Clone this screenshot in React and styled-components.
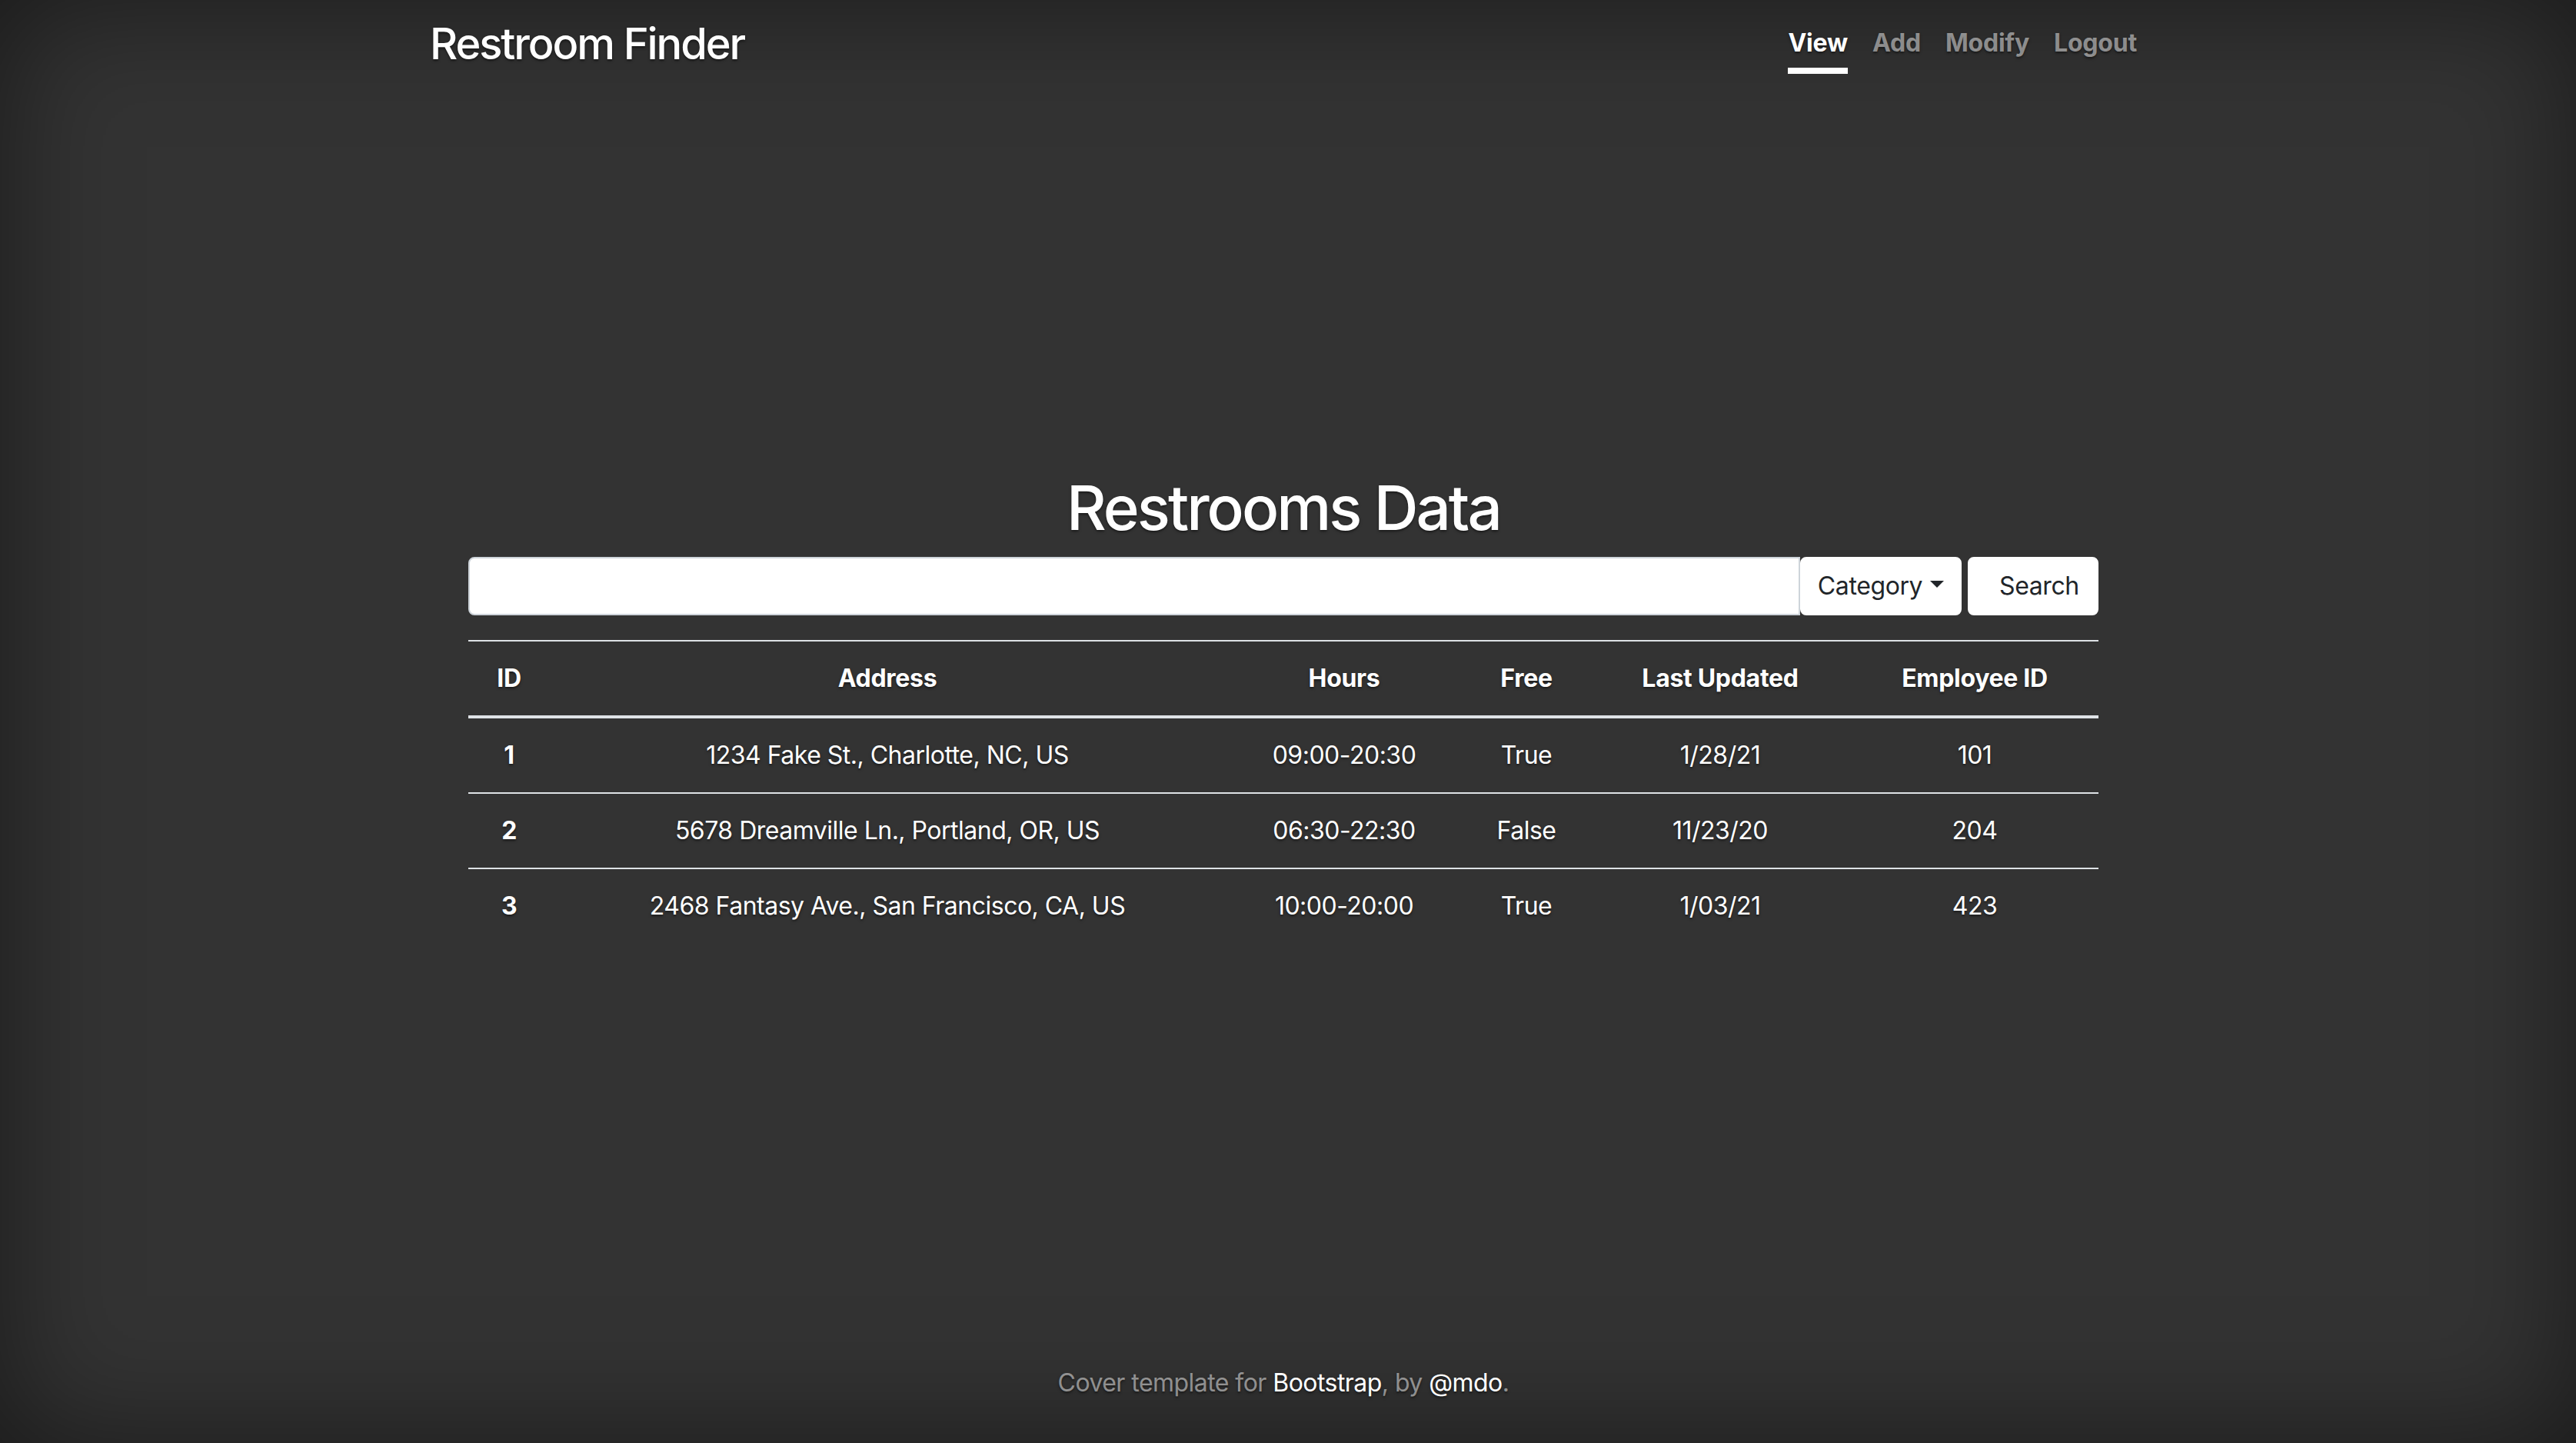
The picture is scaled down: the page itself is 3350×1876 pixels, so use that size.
import React from "react";
import styled, { createGlobalStyle } from "styled-components";

const GlobalStyle = createGlobalStyle`
  html, body {
    margin: 0;
    padding: 0;
    height: 100%;
  }
  body {
    background-color: #333;
    color: #fff;
    font-family: Inter, "Noto Sans", "Liberation Sans", sans-serif;
    font-size: 32px;
    line-height: 1.5;
    text-shadow: 0 1.6px 3.2px rgba(0, 0, 0, 0.5);
    box-shadow: inset 0 0 160px rgba(0, 0, 0, 0.5);
  }
  * { box-sizing: border-box; }
`;

const Page = styled.div`
  display: flex;
  min-height: 100vh;
  padding-right: 12px;
`;

const Cover = styled.div`
  display: flex;
  flex-direction: column;
  width: 2220px;
  min-height: 100vh;
  margin: 0 auto;
`;

const Masthead = styled.header`
  display: flex;
  justify-content: space-between;
  align-items: flex-start;
  padding-top: 24px;
`;

const Brand = styled.h3`
  margin: 0;
  font-size: 56px;
  font-weight: 500;
  line-height: 1.2;
  letter-spacing: -2.1px;
`;

const Nav = styled.nav`
  display: flex;
  gap: 32px;
`;

const NavLink = styled.a`
  display: block;
  padding: 8px 0;
  font-size: 32px;
  font-weight: 700;
  line-height: 48px;
  letter-spacing: -0.2px;
  text-decoration: none;
  color: ${(p) => (p.$active ? "#fff" : "rgba(255,255,255,0.5)")};
  border-bottom: 8px solid ${(p) => (p.$active ? "#fff" : "transparent")};
`;

const Main = styled.main`
  margin: auto 0;
  padding: 0 50px;
`;

const Heading = styled.h1`
  margin: 0 0 16px;
  font-size: 80px;
  font-weight: 500;
  line-height: 1.2;
  text-align: center;
  letter-spacing: -3px;
`;

const SearchRow = styled.div`
  display: flex;
  height: 76px;
`;

const SearchInput = styled.input`
  flex: 1;
  min-width: 0;
  height: 76px;
  border: 2px solid #ced4da;
  border-radius: 8px 0 0 8px;
  background: #fff;
  padding: 12px 24px;
  font-family: inherit;
  font-size: 32px;
  color: #495057;
  outline: none;
`;

const Button = styled.button`
  display: flex;
  align-items: center;
  justify-content: center;
  height: 76px;
  width: ${(p) => p.$w}px;
  margin-left: ${(p) => p.$ml || 0}px;
  padding: ${(p) => (p.$pl ? `0 0 0 ${p.$pl}px` : "0")};
  border: 2px solid #fff;
  border-radius: 8px;
  background: #fff;
  color: #212529;
  font-family: inherit;
  font-size: 32px;
  line-height: 48px;
  letter-spacing: -0.4px;
  text-shadow: none;
  cursor: pointer;
`;

const Caret = styled.span`
  display: inline-block;
  margin-left: 10px;
  width: 0;
  height: 0;
  border-top: 9.6px solid #212529;
  border-left: 9.6px solid transparent;
  border-right: 9.6px solid transparent;
  position: relative;
  top: -3px;
`;

const Table = styled.table`
  width: 100%;
  margin: 32px 0;
  border-collapse: collapse;
  table-layout: fixed;
  color: #fff;
`;

const HeadCell = styled.th`
  padding: 24px 0;
  font-size: 32px;
  line-height: 48px;
  font-weight: 700;
  letter-spacing: -0.3px;
  text-align: center;
  vertical-align: bottom;
  border-top: 2px solid #dee2e6;
  border-bottom: 4px solid #dee2e6;
`;

const Cell = styled.td`
  padding: 24px 0;
  font-size: 32px;
  line-height: 48px;
  font-weight: ${(p) => (p.$bold ? 700 : 400)};
  letter-spacing: -0.5px;
  text-align: center;
  vertical-align: top;
  border-top: 2px solid #dee2e6;
  white-space: nowrap;
`;

const Footer = styled.footer`
  padding-bottom: 54px;
  text-align: center;
  color: rgba(255, 255, 255, 0.5);
  font-size: 32px;
  line-height: 48px;
  letter-spacing: -0.55px;
`;

const FootLink = styled.a`
  color: #fff;
  text-decoration: none;
`;

const columns = [
  { label: "ID", width: 106 },
  { label: "Address", width: 878 },
  { label: "Hours", width: 310 },
  { label: "Free", width: 164 },
  { label: "Last Updated", width: 340 },
  { label: "Employee ID", width: 322 },
];

const rows = [
  ["1", "1234 Fake St., Charlotte, NC, US", "09:00-20:30", "True", "1/28/21", "101"],
  ["2", "5678 Dreamville Ln., Portland, OR, US", "06:30-22:30", "False", "11/23/20", "204"],
  ["3", "2468 Fantasy Ave., San Francisco, CA, US", "10:00-20:00", "True", "1/03/21", "423"],
];

export default function App() {
  return (
    <>
      <GlobalStyle />
      <Page>
        <Cover>
          <Masthead>
            <Brand>Restroom Finder</Brand>
            <Nav>
              <NavLink $active href="#">View</NavLink>
              <NavLink href="#">Add</NavLink>
              <NavLink href="#">Modify</NavLink>
              <NavLink href="#">Logout</NavLink>
            </Nav>
          </Masthead>

          <Main>
            <Heading>Restrooms Data</Heading>
            <SearchRow>
              <SearchInput type="text" />
              <Button $w={210}>
                Category
                <Caret />
              </Button>
              <Button $w={170} $ml={8} $pl={16}>
                Search
              </Button>
            </SearchRow>
            <Table>
              <colgroup>
                {columns.map((c) => (
                  <col key={c.label} style={{ width: c.width }} />
                ))}
              </colgroup>
              <thead>
                <tr>
                  {columns.map((c) => (
                    <HeadCell key={c.label}>{c.label}</HeadCell>
                  ))}
                </tr>
              </thead>
              <tbody>
                {rows.map((r) => (
                  <tr key={r[0]}>
                    {r.map((v, i) => (
                      <Cell key={i} $bold={i === 0}>
                        {v}
                      </Cell>
                    ))}
                  </tr>
                ))}
              </tbody>
            </Table>
          </Main>

          <Footer>
            Cover template for <FootLink href="#">Bootstrap</FootLink>, by{" "}
            <FootLink href="#">@mdo</FootLink>.
          </Footer>
        </Cover>
      </Page>
    </>
  );
}
